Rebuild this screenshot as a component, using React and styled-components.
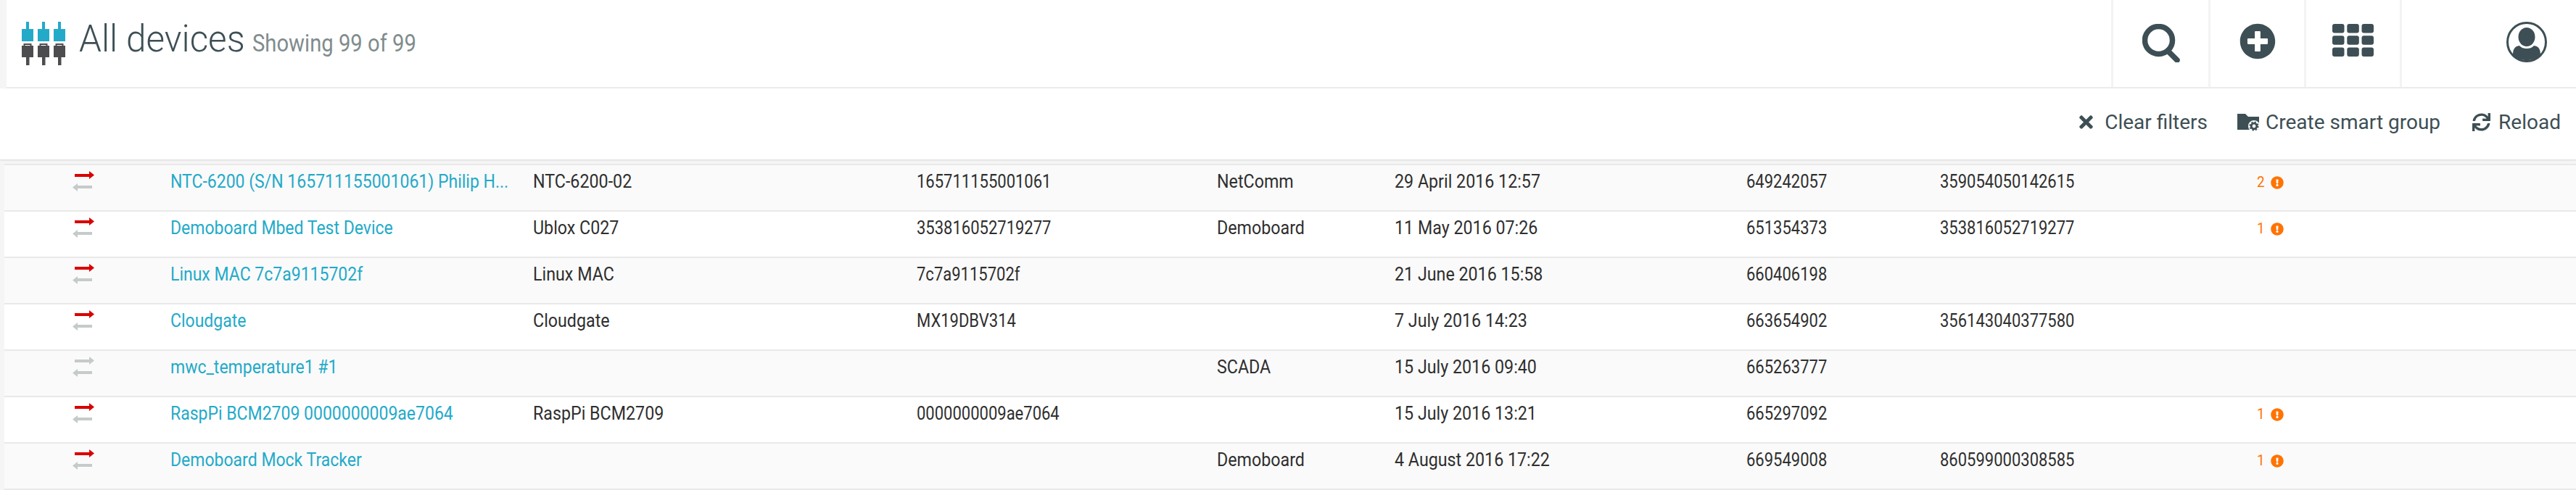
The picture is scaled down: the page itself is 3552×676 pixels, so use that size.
import React from 'react'
import styled, { createGlobalStyle } from 'styled-components'
import { FaTimes, FaSync, FaPlusCircle, FaExclamationCircle } from 'react-icons/fa'

const GlobalStyle = createGlobalStyle`
  html, body {
    margin: 0;
    padding: 0;
    background: #f5f5f5;
  }
  body {
    font-family: "Roboto", "Liberation Sans", sans-serif;
  }
`

const devices = [
  { name: 'NTC-6200 (S/N 165711155001061) Philip H...', type: 'NTC-6200-02', serial: '165711155001061', vendor: 'NetComm', date: '29 April 2016 12:57', id: '649242057', imei: '359054050142615', alerts: 2, out: true },
  { name: 'Demoboard Mbed Test Device', type: 'Ublox C027', serial: '353816052719277', vendor: 'Demoboard', date: '11 May 2016 07:26', id: '651354373', imei: '353816052719277', alerts: 1, out: true },
  { name: 'Linux MAC 7c7a9115702f', type: 'Linux MAC', serial: '7c7a9115702f', vendor: '', date: '21 June 2016 15:58', id: '660406198', imei: '', alerts: 0, out: true },
  { name: 'Cloudgate', type: 'Cloudgate', serial: 'MX19DBV314', vendor: '', date: '7 July 2016 14:23', id: '663654902', imei: '356143040377580', alerts: 0, out: true },
  { name: 'mwc_temperature1 #1', type: '', serial: '', vendor: 'SCADA', date: '15 July 2016 09:40', id: '665263777', imei: '', alerts: 0, out: false },
  { name: 'RaspPi BCM2709 0000000009ae7064', type: 'RaspPi BCM2709', serial: '0000000009ae7064', vendor: '', date: '15 July 2016 13:21', id: '665297092', imei: '', alerts: 1, out: true },
  { name: 'Demoboard Mock Tracker', type: '', serial: '', vendor: 'Demoboard', date: '4 August 2016 17:22', id: '669549008', imei: '860599000308585', alerts: 1, out: true },
]

const Page = styled.div`
  width: 3552px;
  height: 676px;
  overflow: hidden;
  display: flex;
  flex-direction: column;
`

const Header = styled.header`
  height: 120px;
  margin-left: 9px;
  background: #fff;
  border-bottom: 2px solid #ececec;
  display: flex;
  align-items: stretch;
  flex: none;
`

const Brand = styled.div`
  flex: 1;
  display: flex;
  align-items: flex-start;
  padding: 30px 0 0 21px;
`

const Heading = styled.h1`
  margin: 0 0 0 19px;
  display: flex;
  align-items: baseline;
  font-weight: 300;
  font-size: 52px;
  line-height: 48px;
  color: #3d4f54;
`

const TitleText = styled.span`
  width: 239px;
  white-space: nowrap;
  transform: scaleX(0.95);
  transform-origin: left;
`

const Count = styled.span`
  font-weight: 400;
  font-size: 33px;
  white-space: nowrap;
  color: #7f8c8d;
  transform: scaleX(0.885);
  transform-origin: left;
`

const NavCell = styled.div`
  width: ${(p) => p.$width}px;
  border-left: 3px solid #f3f3f3;
  display: flex;
  align-items: flex-start;
  justify-content: ${(p) => (p.$end ? 'flex-end' : 'center')};
  padding-top: ${(p) => p.$top}px;
  padding-right: ${(p) => (p.$end ? 40 : 0)}px;
  color: #3d4f54;
  box-sizing: border-box;
`

const Toolbar = styled.div`
  height: 93px;
  padding: 0 21px 5px 0;
  flex: none;
  background: #fff;
  box-shadow: 0 1px 2px rgba(0, 0, 0, 0.12);
  display: flex;
  align-items: center;
  justify-content: flex-end;
`

const ToolButton = styled.button`
  border: 0;
  background: none;
  padding: 0;
  margin-left: ${(p) => p.$gap || 0}px;
  display: flex;
  align-items: center;
  font: inherit;
  font-size: 28px;
  color: #3d4f54;
`

const ToolIcon = styled.span`
  display: flex;
  margin-right: ${(p) => p.$gap}px;
`

const Rows = styled.div`
  margin: 6px 0 0 6px;
  background: #fff;
  border-bottom: 2px solid #e9e9e9;
`

const Row = styled.div`
  height: 62px;
  border-top: 2px solid #e9e9e9;
  background: ${(p) => (p.$odd ? '#fafafa' : '#fff')};
  display: grid;
  grid-template-columns: 229px 500px 529px 414px 245px 485px 267px 437px 1fr;
  font-size: 25px;
  color: #2f2f2f;
  line-height: 45px;
`

const Cell = styled.div`
  white-space: nowrap;
  transform: scaleX(${(p) => p.$x});
  transform-origin: left;
`

const DeviceLink = styled.a`
  color: #23aac9;
`

const Traffic = styled.div`
  display: flex;
  padding: 8px 0 0 94px;
`

const Alert = styled.div`
  display: flex;
  align-items: center;
  height: 47px;
  color: #ff7300;
  font-size: 21px;
`

const AlertCount = styled.span`
  width: 19px;
  transform: scaleX(0.9);
  transform-origin: left;
`

const Logo = () => (
  <svg width="60" height="60" viewBox="0 0 60 60">
    {[0, 22, 44].map((x) => (
      <g key={x}>
        <rect x={x + 6} y="0" width="4" height="10" fill="#23aac9" />
        <rect x={x} y="10" width="16" height="17" fill="#23aac9" />
        <path d={`M${x + 3.500} 35v-4h9v4`} fill="none" stroke="#4d4d4f" strokeWidth="2" />
        <rect x={x} y="33" width="16" height="16" fill="#4d4d4f" />
        <rect x={x + 6} y="49" width="4.500" height="11" fill="#4d4d4f" />
      </g>
    ))}
  </svg>
)

const SearchIcon = () => (
  <svg width="52" height="53" viewBox="0 0 52 53">
    <circle cx="22.500" cy="22.500" r="19" fill="none" stroke="currentColor" strokeWidth="7.500" />
    <path d="M35 37 L48 50" stroke="currentColor" strokeWidth="7.500" strokeLinecap="round" />
  </svg>
)

const GridIcon = () => (
  <svg width="57" height="45" viewBox="0 0 57 45">
    {[0, 20.300, 40.500].map((x) =>
      [0, 16.300, 32.500].map((y) => (
        <rect key={`${x}-${y}`} x={x} y={y} width="16.500" height="12.500" rx="3" fill="currentColor" />
      ))
    )}
  </svg>
)

const UserIcon = () => (
  <svg width="56" height="56" viewBox="0 0 56 56">
    <circle cx="28" cy="28" r="26.500" fill="none" stroke="currentColor" strokeWidth="3" />
    <ellipse cx="28" cy="21" rx="11.500" ry="13" fill="currentColor" />
    <path d="M9 46c0-8 2-12 9-13 3 3 6 4 10 4s7-1 10-4c7 1 9 5 9 13-5 5-12 7-19 7s-14-2-19-7z" fill="currentColor" />
  </svg>
)

const FolderIcon = () => (
  <svg width="30" height="24" viewBox="0 0 30 24">
    <path d="M0 0h11l4 4h15v18H0z" fill="#3d4f54" />
    <circle cx="23" cy="17" r="8" fill="#fff" />
    <circle cx="23" cy="17" r="3.800" fill="none" stroke="#3d4f54" strokeWidth="2.800" />
    <circle cx="23" cy="17" r="5.800" fill="none" stroke="#3d4f54" strokeWidth="1.600" strokeDasharray="2.300 2.250" />
  </svg>
)

const Arrows = ({ out }) => (
  <svg width="30" height="28" viewBox="0 0 30 28">
    <path d="M3 4h20V0l7 5.500-7 5.500V8H3z" fill={out ? '#d90000' : '#c5caca'} />
    <path d="M27 20H7v-3l-7 5.500L7 28v-4h20z" fill="#c5caca" />
  </svg>
)

export default function App() {
  return (
    <Page>
      <GlobalStyle />
      <Header>
        <Brand>
          <Logo />
          <Heading>
            <TitleText>All devices</TitleText>
            <Count>Showing 99 of 99</Count>
          </Heading>
        </Brand>
        <NavCell $width={134} $top={33}><SearchIcon /></NavCell>
        <NavCell $width={132} $top={32}><FaPlusCircle size={50} /></NavCell>
        <NavCell $width={132} $top={33}><GridIcon /></NavCell>
        <NavCell $width={243} $top={30} $end><UserIcon /></NavCell>
      </Header>
      <Toolbar>
        <ToolButton>
          <ToolIcon $gap={12}><FaTimes size={27} /></ToolIcon>
          Clear filters
        </ToolButton>
        <ToolButton $gap={41}>
          <ToolIcon $gap={9}><FolderIcon /></ToolIcon>
          Create smart group
        </ToolButton>
        <ToolButton $gap={44}>
          <ToolIcon $gap={11}><FaSync size={25} /></ToolIcon>
          Reload
        </ToolButton>
      </Toolbar>
      <Rows>
        {devices.map((d, i) => (
          <Row key={d.id} $odd={i % 2 === 0}>
            <Traffic><Arrows out={d.out} /></Traffic>
            <Cell $x={0.92}><DeviceLink>{d.name}</DeviceLink></Cell>
            <Cell $x={0.93}>{d.type}</Cell>
            <Cell $x={0.88}>{d.serial}</Cell>
            <Cell $x={0.93}>{d.vendor}</Cell>
            <Cell $x={0.93}>{d.date}</Cell>
            <Cell $x={0.88}>{d.id}</Cell>
            <Cell $x={0.88}>{d.imei}</Cell>
            <div>
              {d.alerts > 0 && (
                <Alert>
                  <AlertCount>{d.alerts}</AlertCount>
                  <FaExclamationCircle size={18} />
                </Alert>
              )}
            </div>
          </Row>
        ))}
      </Rows>
    </Page>
  )
}
